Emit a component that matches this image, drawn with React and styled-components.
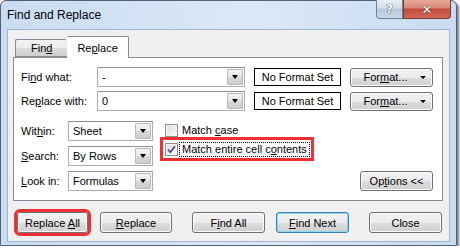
import React from "react";
import styled, { createGlobalStyle } from "styled-components";

const GlobalStyle = createGlobalStyle`
  html, body {
    margin: 0;
    padding: 0;
    background: #fff;
  }
  body {
    font-family: "Liberation Sans", Arial, sans-serif;
    font-size: 11px;
    color: #000;
  }
  * { box-sizing: border-box; }
`;

const Window = styled.div`
  width: 457px;
  height: 246px;
  border: 1px solid #52627a;
  border-radius: 6px 6px 0 0;
  background: linear-gradient(90deg, #cadcf2 0%, #dbe8f7 55%, #c9dbf1 100%);
  box-shadow: 2px 2px 2px rgba(0, 0, 0, 0.5);
  padding: 0 6px 3px 6px;
  display: flex;
  flex-direction: column;
`;

const TitleBar = styled.div`
  height: 28px;
  display: flex;
  align-items: flex-start;
`;

const Title = styled.div`
  font-size: 12px;
  line-height: 29px;
  color: #000;
`;

const Captions = styled.div`
  margin-left: auto;
  margin-right: -1px;
  margin-top: -1px;
  display: flex;
`;

const CaptionButton = styled.div`
  width: ${(p) => (p.$close ? 48 : 27)}px;
  height: 19px;
  border: 1px solid ${(p) => (p.$close ? "#7a3a33" : "#6f8198")};
  border-top: none;
  border-radius: ${(p) => (p.$close ? "0 0 4px 0" : "0 0 0 4px")};
  background: ${(p) =>
    p.$close
      ? "linear-gradient(180deg, #e9a99c 0%, #d98574 45%, #c44a3a 50%, #d0685a 100%)"
      : "linear-gradient(180deg, #e6eef8 0%, #d2deec 45%, #b7c8dc 50%, #c6d5e6 100%)"};
  display: flex;
  align-items: center;
  justify-content: center;
  color: #fff;
  font-family: "DejaVu Sans", sans-serif;
  font-weight: bold;
  font-size: ${(p) => (p.$close ? 13 : 12)}px;
  text-shadow: 0 0 1px #333, 0 0 1px #333;
`;

const Body = styled.div`
  flex: 1;
  background: #f0f0f0;
  border: 1px solid #a2b4ca;
  padding: 6px 0 0 5px;
  display: flex;
  flex-direction: column;
`;

const TabRow = styled.div`
  height: 21px;
  display: flex;
  align-items: flex-end;
  padding-left: 2px;
  position: relative;
  z-index: 1;
`;

const Tab = styled.div`
  height: ${(p) => (p.$active ? 22 : 18)}px;
  margin-bottom: ${(p) => (p.$active ? -1 : 0)}px;
  padding: 0 ${(p) => (p.$active ? 10 : 15)}px;
  border: 1px solid #898c95;
  border-bottom: ${(p) => (p.$active ? "none" : "1px solid #898c95")};
  border-left: ${(p) => (p.$active ? "none" : "1px solid #898c95")};
  border-radius: 2px 2px 0 0;
  background: ${(p) =>
    p.$active ? "#fff" : "linear-gradient(180deg, #f3f3f3 0%, #ebebeb 50%, #dcdcdc 51%, #cfcfcf 100%)"};
  display: flex;
  align-items: center;
  font-size: 11px;
  ${(p) => (p.$first ? "border-left: 1px solid #898c95; border-right: none;" : "")}
`;

const Panel = styled.div`
  width: 430px;
  height: 144px;
  border: 1px solid #898c95;
  background: #fff;
  padding: 10px 9px 0 7px;
  display: flex;
  flex-direction: column;
`;

const TopGrid = styled.div`
  display: grid;
  grid-template-columns: 67px 148px 87px 83px;
  grid-auto-rows: 18px;
  column-gap: 9px;
  row-gap: 6px;
  align-items: center;
`;

const Label = styled.div`
  white-space: nowrap;
`;

const Combo = styled.div`
  height: ${(p) => p.$h || 18}px;
  border: 1px solid #a9acb4;
  border-top-color: #8c8f98;
  background: #fff;
  display: flex;
  align-items: stretch;
`;

const ComboText = styled.div`
  flex: 1;
  padding-left: 4px;
  display: flex;
  align-items: center;
`;

const DropButton = styled.div`
  width: 16px;
  margin: 1px;
  border: 1px solid #b5b8bf;
  border-radius: 1px;
  background: linear-gradient(180deg, #f4f4f4 0%, #e8e8e8 50%, #d9d9d9 51%, #cdcdcd 100%);
  display: flex;
  align-items: center;
  justify-content: center;
`;

const Arrow = styled.span`
  width: 0;
  height: 0;
  border-left: 3.5px solid transparent;
  border-right: 3.5px solid transparent;
  border-top: 4px solid #000;
`;

const FormatBox = styled.div`
  height: 18px;
  border: 1px solid #000;
  background: #fff;
  display: flex;
  align-items: center;
  justify-content: center;
`;

const Button = styled.div`
  width: ${(p) => p.$w || 73}px;
  height: ${(p) => p.$h || 21}px;
  margin-left: ${(p) => p.$ml || 0}px;
  border: 1px solid ${(p) => (p.$default ? "#3c7fb1" : "#707070")};
  border-radius: 3px;
  background: linear-gradient(180deg, #f2f2f2 0%, #ebebeb 50%, #dddddd 51%, #cfcfcf 100%);
  box-shadow: inset 0 0 0 1px ${(p) => (p.$default ? "#8ed6f3" : "#fcfcfc")};
  display: flex;
  align-items: center;
  justify-content: center;
  position: relative;
  white-space: nowrap;
  outline: ${(p) => (p.$marked ? "3px solid #ee3030" : "none")};
  outline-offset: 0;
`;

const ButtonText = styled.span`
  margin-right: ${(p) => p.$mr || 0}px;
`;

const ButtonArrow = styled(Arrow)`
  position: absolute;
  right: 6px;
  top: 7px;
  border-left-width: 3px;
  border-right-width: 3px;
  border-top-width: 3px;
`;

const Lower = styled.div`
  margin-top: 11px;
  display: flex;
  align-items: flex-start;
  height: 70px;
`;

const LeftGrid = styled.div`
  display: grid;
  grid-template-columns: 47px 85px;
  grid-auto-rows: 20px;
  row-gap: 5px;
  align-items: center;
`;

const CheckCol = styled.div`
  margin-left: 12px;
  margin-top: 2px;
  display: flex;
  flex-direction: column;
  gap: 5px;
`;

const CheckItem = styled.div`
  display: flex;
  align-items: center;
  gap: 2px;
  height: 14px;
  outline: ${(p) => (p.$marked ? "3px solid #ee3030" : "none")};
  outline-offset: 2px;
`;

const Box = styled.div`
  width: 13px;
  height: 13px;
  border: 1px solid #8f8f8f;
  background: linear-gradient(135deg, #dcdcdc 0%, #f5f5f5 80%, #fff 100%);
  box-shadow: inset 0 0 0 1px #f4f4f4;
  display: flex;
  align-items: center;
  justify-content: center;
`;

const CheckLabel = styled.div`
  padding: 0 2px;
  line-height: 13px;
  outline: ${(p) => (p.$focus ? "1px dotted #000" : "none")};
`;

const OptionsButton = styled(Button)`
  margin-left: auto;
  align-self: flex-end;
`;

const ButtonRow = styled.div`
  margin-top: 11px;
  display: flex;
`;

const Check = () => (
  <svg width="9" height="9" viewBox="0 0 9 9">
    <path d="M1 4.6 L3.4 7.2 L8 1.2" fill="none" stroke="#3d4f9c" strokeWidth="1.7" />
  </svg>
);

const Select = ({ value }) => (
  <Combo $h={20}>
    <ComboText>{value}</ComboText>
    <DropButton>
      <Arrow />
    </DropButton>
  </Combo>
);

const FormatButton = () => (
  <Button $w={83} $h={19}>
    <ButtonText $mr={12}>
      For<u>m</u>at...
    </ButtonText>
    <ButtonArrow />
  </Button>
);

export default function App() {
  return (
    <>
      <GlobalStyle />
      <Window>
        <TitleBar>
          <Title>Find and Replace</Title>
          <Captions>
            <CaptionButton>?</CaptionButton>
            <CaptionButton $close>✕</CaptionButton>
          </Captions>
        </TitleBar>
        <Body>
          <TabRow>
            <Tab $first>
              <span>
                Fin<u>d</u>
              </span>
            </Tab>
            <Tab $active>
              <span>
                Re<u>p</u>lace
              </span>
            </Tab>
          </TabRow>
          <Panel>
            <TopGrid>
              <Label>
                Fi<u>n</u>d what:
              </Label>
              <Select value="-" />
              <FormatBox>No Format Set</FormatBox>
              <FormatButton />
              <Label>
                Re<u>p</u>lace with:
              </Label>
              <Select value="0" />
              <FormatBox>No Format Set</FormatBox>
              <FormatButton />
            </TopGrid>
            <Lower>
              <LeftGrid>
                <Label>
                  Wit<u>h</u>in:
                </Label>
                <Select value="Sheet" />
                <Label>
                  <u>S</u>earch:
                </Label>
                <Select value="By Rows" />
                <Label>
                  <u>L</u>ook in:
                </Label>
                <Select value="Formulas" />
              </LeftGrid>
              <CheckCol>
                <CheckItem>
                  <Box />
                  <CheckLabel>
                    Match <u>c</u>ase
                  </CheckLabel>
                </CheckItem>
                <CheckItem $marked>
                  <Box>
                    <Check />
                  </Box>
                  <CheckLabel $focus>
                    Match entire cell c<u>o</u>ntents
                  </CheckLabel>
                </CheckItem>
              </CheckCol>
              <OptionsButton $w={73} $h={20}>
                <ButtonText>
                  Op<u>t</u>ions &lt;&lt;
                </ButtonText>
              </OptionsButton>
            </Lower>
          </Panel>
          <ButtonRow>
            <Button $w={71} $ml={4} $marked>
              <ButtonText>
                Replace <u>A</u>ll
              </ButtonText>
            </Button>
            <Button $w={72} $ml={12}>
              <ButtonText>
                <u>R</u>eplace
              </ButtonText>
            </Button>
            <Button $ml={20}>
              <ButtonText>
                F<u>i</u>nd All
              </ButtonText>
            </Button>
            <Button $ml={11} $default>
              <ButtonText>
                <u>F</u>ind Next
              </ButtonText>
            </Button>
            <Button $ml={20}>
              <ButtonText>Close</ButtonText>
            </Button>
          </ButtonRow>
        </Body>
      </Window>
    </>
  );
}
